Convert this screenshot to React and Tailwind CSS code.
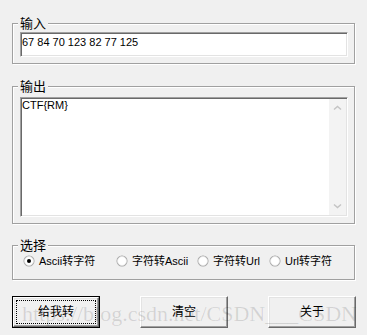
import React from "react";

const sunken =
  "bg-white border border-t-[#a0a0a0] border-l-[#a0a0a0] border-b-white border-r-white shadow-[inset_1px_1px_0_#696969,inset_-1px_-1px_0_#e3e3e3]";

function Group({ label, className, children }) {
  return (
    <div
      className={`relative w-[343px] border border-[#a0a0a0] shadow-[inset_1px_1px_0_#fff,1px_1px_0_#fff] ${className}`}
    >
      <span className="absolute -top-[8px] left-[5px] px-[2px] text-[13px] leading-[15px] bg-[#f0f0f0]">
        {label}
      </span>
      {children}
    </div>
  );
}

function Radio({ checked, label, width }) {
  return (
    <div className={`flex items-center h-[14px] ${width}`}>
      <svg width="12" height="12" viewBox="0 0 12 12" className="shrink-0">
        <circle cx="6" cy="6" r="5.5" fill="#a0a0a0" />
        <circle cx="6" cy="6" r="4.5" fill="#fff" stroke="#e3e3e3" strokeWidth="0.8" />
        {checked && <circle cx="6" cy="6" r="2" fill="#000" />}
      </svg>
      <span className="ml-[4px] whitespace-nowrap">{label}</span>
    </div>
  );
}

function Chevron({ down }) {
  return (
    <svg width="9" height="6" viewBox="0 0 9 6">
      <path
        d={down ? "M1 1.5 L4.5 4.5 L8 1.5" : "M1 4.5 L4.5 1.5 L8 4.5"}
        fill="none"
        stroke="#c4c4c4"
        strokeWidth="1.5"
      />
    </svg>
  );
}

function Button({ children, primary }) {
  if (primary) {
    return (
      <div className="w-[88px] h-[32px] border border-black">
        <div className="w-full h-full bg-[#f0f0f0] border border-t-white border-l-white border-b-[#696969] border-r-[#696969] shadow-[inset_-1px_-1px_0_#a0a0a0,inset_1px_1px_0_#e3e3e3] p-[2px]">
          <div className="w-full h-full border border-dotted border-black flex items-center justify-center text-[12px]">
            {children}
          </div>
        </div>
      </div>
    );
  }
  return (
    <div className="w-[88px] h-[32px] bg-[#f0f0f0] border border-t-white border-l-white border-b-[#696969] border-r-[#696969] shadow-[inset_-1px_-1px_0_#a0a0a0,inset_1px_1px_0_#e3e3e3] flex items-center justify-center text-[12px]">
      {children}
    </div>
  );
}

export default function App() {
  return (
    <div className="relative w-[367px] h-[335px] overflow-hidden bg-[#f0f0f0] text-black text-[11px] font-['Liberation_Sans','Noto_Sans_CJK_SC',sans-serif]">
      <div className="pt-[23px] pl-[12px]">
        {/* 输入 */}
        <Group label="输入">
          <div className={`ml-[7px] mt-[8px] mb-[6px] w-[328px] h-[25px] ${sunken}`}>
            <div className="pl-[1px] pt-[3px] leading-[13px]">67 84 70 123 82 77 125</div>
          </div>
        </Group>

        {/* 输出 */}
        <Group label="输出" className="mt-[22px]">
          <div className={`ml-[7px] mt-[10px] mb-[6px] w-[328px] h-[120px] flex ${sunken}`}>
            <div className="flex-1 pl-[1px] pt-[1px] leading-[13px]">CTF{"{"}RM{"}"}</div>
            <div className="w-[17px] mt-[1px] mb-[1px] mr-[1px] bg-[#f3f3f3] flex flex-col items-center justify-between py-[6px]">
              <Chevron />
              <Chevron down />
            </div>
          </div>
        </Group>

        {/* 选择 */}
        <Group label="选择" className="mt-[21px]">
          <div className="ml-[10px] mt-[8px] mb-[11px] flex">
            <Radio checked label="Ascii转字符" width="w-[93px]" />
            <Radio label="字符转Ascii" width="w-[81px]" />
            <Radio label="字符转Url" width="w-[72px]" />
            <Radio label="Url转字符" width="w-[70px]" />
          </div>
        </Group>

        <div className="mt-[16px] w-[344px] flex justify-between">
          <Button primary>给我转</Button>
          <Button>清空</Button>
          <Button>关于</Button>
        </div>
      </div>

      <div className="pointer-events-none absolute left-[22px] top-[303px] whitespace-nowrap text-[22px] leading-[22px] text-black/[0.12] font-['Liberation_Serif',serif]">
        https://blog.csdn.net/CSDN___CSDN
      </div>
    </div>
  );
}
